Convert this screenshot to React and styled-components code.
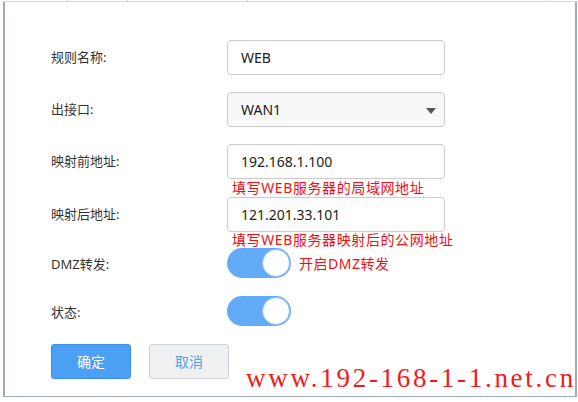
import styled, { createGlobalStyle } from 'styled-components'

const GlobalStyle = createGlobalStyle`
  html, body {
    margin: 0;
    padding: 0;
    background: #fff;
  }
  body {
    font-family: "Noto Sans", "Noto Sans CJK SC", sans-serif;
    color: #333;
  }
`

const fields = [
  { label: '规则名称:', value: 'WEB' },
  { label: '出接口:', value: 'WAN1', select: true },
  { label: '映射前地址:', value: '192.168.1.100', hint: '填写WEB服务器的局域网地址', hintH: 18 },
  { label: '映射后地址:', value: '121.201.33.101', hint: '填写WEB服务器映射后的公网地址', hintH: 16 },
]

const App = () => {
  return (
    <>
      <GlobalStyle />
      <Page>
        <TopBar>
          <Tick style={{ left: 64 }} />
          <Tick style={{ left: 124 }} />
          <Tick style={{ left: 244 }} />
          <Tick style={{ left: 543 }} />
        </TopBar>
        <Frame>
          <Form>
            {fields.map((f) => (
              <Row key={f.label} gap={f.hint ? 0 : 17}>
                <Label>{f.label}</Label>
                <Control>
                  <Input $select={f.select}>
                    {f.value}
                    {f.select && <Arrow />}
                  </Input>
                  {f.hint && <Hint h={f.hintH}>{f.hint}</Hint>}
                </Control>
              </Row>
            ))}
            <Row gap={16}>
              <Label $small>DMZ转发:</Label>
              <ToggleLine>
                <Toggle>
                  <Knob />
                </Toggle>
                <Note>开启DMZ转发</Note>
              </ToggleLine>
            </Row>
            <Row gap={16}>
              <Label $small>状态:</Label>
              <ToggleLine>
                <Toggle>
                  <Knob />
                </Toggle>
              </ToggleLine>
            </Row>
            <Buttons>
              <Button $primary>确定</Button>
              <Button>取消</Button>
            </Buttons>
          </Form>
          <Watermark>www.192-168-1-1.net.cn</Watermark>
        </Frame>
      </Page>
    </>
  )
}

export default App

const Page = styled.div`
  width: 578px;
  height: 402px;
  position: relative;
  overflow: hidden;
`
const TopBar = styled.div`
  position: relative;
  height: 1px;
  border-bottom: 1px solid #d6d6d6;
  margin-left: 3px;
`
const Tick = styled.span`
  position: absolute;
  top: 0;
  width: 1px;
  height: 1px;
  background: #d0d0d0;
`
const Frame = styled.div`
  position: relative;
  margin-left: 3px;
  width: 570px;
  height: 394px;
  border-left: 2px solid #9eacbd;
  border-right: 2px solid #9eacbd;
  border-bottom: 1px solid #9eacbd;
  box-sizing: content-box;
`
const Form = styled.div`
  display: flex;
  flex-direction: column;
  padding: 38px 0 0 46px;
`
const Row = styled.div`
  display: grid;
  grid-template-columns: 176px 218px;
  align-items: start;
  margin-bottom: ${(p) => p.gap}px;
`
const Label = styled.div`
  font-size: 13px;
  line-height: ${(p) => (p.$small ? '32px' : '35px')};
  color: #333;
`
const Control = styled.div`
  display: flex;
  flex-direction: column;
`
const Input = styled.div`
  position: relative;
  box-sizing: border-box;
  height: 35px;
  border: 1px solid #cbcbcb;
  border-radius: 4px;
  background: ${(p) => (p.$select ? '#f8f8f8' : '#fff')};
  padding-left: 13px;
  font-size: 14px;
  line-height: 33px;
  color: #222;
`
const Arrow = styled.span`
  position: absolute;
  right: 8px;
  top: 15px;
  width: 0;
  height: 0;
  border-left: 5px solid transparent;
  border-right: 5px solid transparent;
  border-top: 6px solid #555;
`
const Hint = styled.div`
  height: ${(p) => p.h}px;
  line-height: ${(p) => p.h}px;
  margin-left: 5px;
  font-size: 14px;
  letter-spacing: 0.6px;
  color: #f01010;
  white-space: nowrap;
`
const ToggleLine = styled.div`
  display: flex;
  align-items: center;
  gap: 8px;
`
const Toggle = styled.div`
  display: flex;
  justify-content: flex-end;
  align-items: center;
  width: 64px;
  height: 30px;
  border-radius: 15px;
  background: #63abf6;
  box-sizing: border-box;
  padding-right: 1px;
`
const Knob = styled.div`
  width: 26px;
  height: 26px;
  border-radius: 50%;
  background: #fff;
  border: 1px solid #8fc3f8;
`
const Note = styled.span`
  font-size: 14px;
  letter-spacing: 0.5px;
  color: #f01010;
`
const Buttons = styled.div`
  display: flex;
  gap: 18px;
`
const Button = styled.div`
  box-sizing: border-box;
  width: 80px;
  height: 35px;
  border-radius: 3px;
  border: 1px solid ${(p) => (p.$primary ? '#3a8ee6' : '#cfd2d6')};
  background: ${(p) => (p.$primary ? '#4ba0f6' : '#eef0f2')};
  color: ${(p) => (p.$primary ? '#fff' : '#5a9fe3')};
  font-size: 14px;
  line-height: 33px;
  text-align: center;
`
const Watermark = styled.div`
  position: absolute;
  left: 241px;
  top: 361px;
  font-family: "Liberation Serif", serif;
  font-size: 27px;
  line-height: 30px;
  letter-spacing: 2.7px;
  color: #f21a1a;
  white-space: nowrap;
`
